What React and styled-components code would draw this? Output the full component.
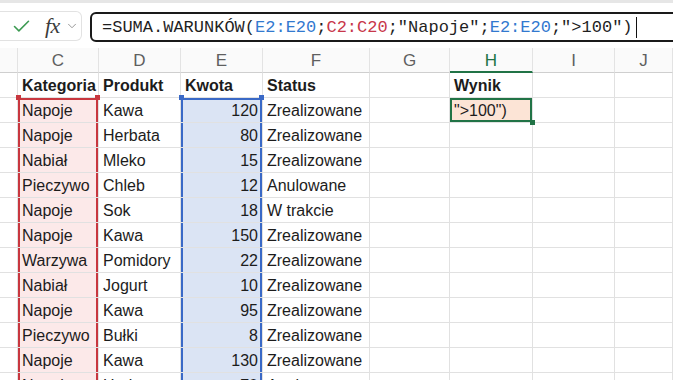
import styled, { createGlobalStyle } from "styled-components";
import { Check, ChevronDown } from "lucide-react";

const GlobalStyle = createGlobalStyle`
  body {
    margin: 0;
    background: #ffffff;
    overflow: hidden;
    font-family: "Liberation Sans", Arial, sans-serif;
  }
`;

const Page = styled.div`
  width: 673px;
  height: 380px;
  overflow: hidden;
  display: flex;
  flex-direction: column;
  & > * {
    flex-shrink: 0;
  }
`;

const Strip = styled.div`
  height: 3px;
  background: #e6e6e6;
`;

const FormulaBar = styled.div`
  height: 45px;
  box-sizing: border-box;
  padding-top: 8px;
  display: flex;
  align-items: flex-start;
  gap: 8px;
  margin-right: -20px;
`;

const FxBox = styled.div`
  width: 82px;
  height: 30px;
  box-sizing: border-box;
  border: 1px solid #e2e2e2;
  border-left: none;
  border-radius: 0 6px 6px 0;
  display: flex;
  align-items: center;
  padding-left: 11px;
  flex-shrink: 0;
`;

const Fx = styled.span`
  font-family: "Liberation Serif", "Times New Roman", serif;
  font-style: italic;
  font-size: 22px;
  color: #3b3b3b;
  margin-left: 13px;
  margin-right: 5px;
  letter-spacing: -0.5px;
`;

const FormulaInput = styled.div`
  flex: 1;
  height: 30px;
  margin-top: 1px;
  box-sizing: border-box;
  border: 2px solid #1a1a1a;
  border-radius: 6px;
  display: flex;
  align-items: center;
  padding-left: 10px;
  font-family: "Liberation Mono", "Courier New", monospace;
  font-size: 17px;
  color: #1f1f1f;
  white-space: nowrap;
`;

const Ref = styled.span`
  color: ${(p) => (p.$tone === "red" ? "#c8374a" : "#3279cf")};
`;

const Caret = styled.span`
  display: inline-block;
  width: 0;
  height: 21px;
  border-left: 1.5px solid #111;
  margin-left: 3px;
`;

const Sheet = styled.div`
  display: grid;
  grid-template-columns: 18px 81px 82px 82px 107px 80px 83px 82px 1fr;
  grid-auto-rows: 25px;
`;

const ColHead = styled.div`
  box-sizing: border-box;
  display: flex;
  align-items: center;
  justify-content: center;
  background: #fafafa;
  border-right: 1px solid #e3e3e3;
  border-bottom: ${(p) => (p.$active ? "2px solid #217346" : "1px solid #cfcfcf")};
  color: ${(p) => (p.$active ? "#217346" : "#5f5f5f")};
  font-size: 17px;
  padding-top: 2px;
`;

const rangeColors = {
  red: { line: "#c8373f", fill: "#fce9e9" },
  blue: { line: "#3a69c6", fill: "#dbe4f4" },
};

const Cell = styled.div`
  position: relative;
  box-sizing: border-box;
  border-right: 1px solid #e1e1e1;
  border-bottom: 1px solid #e1e1e1;
  padding: 1px 4px 0 4px;
  display: flex;
  align-items: center;
  justify-content: ${(p) => (p.$right ? "flex-end" : "flex-start")};
  font-size: 16px;
  font-weight: ${(p) => (p.$bold ? 700 : 400)};
  color: #1c1c1c;
  white-space: nowrap;
  background: ${(p) =>
    p.$active ? "#fce4d6" : p.$range ? rangeColors[p.$range].fill : "transparent"};
  box-shadow: ${(p) => {
    if (p.$active) return "inset 0 0 0 2px #217346";
    if (!p.$range) return "none";
    const c = rangeColors[p.$range].line;
    const top = p.$first ? `, inset 0 2px 0 ${c}` : "";
    return `inset 2px 0 0 ${c}, inset -2px 0 0 ${c}${top}`;
  }};
  z-index: ${(p) => (p.$range || p.$active ? 1 : 0)};

  &::before,
  &::after {
    content: "";
    position: absolute;
    width: 5px;
    height: 5px;
    background: ${(p) =>
      p.$active ? "#217346" : p.$range ? rangeColors[p.$range].line : "transparent"};
  }
  &::before {
    left: -2px;
    top: -3px;
    display: ${(p) => (p.$first ? "block" : "none")};
  }
  &::after {
    display: ${(p) => (p.$first || p.$active ? "block" : "none")};
    right: ${(p) => (p.$active ? "-3px" : "-2px")};
    top: ${(p) => (p.$active ? "auto" : "-3px")};
    bottom: ${(p) => (p.$active ? "-3px" : "auto")};
  }
`;

const columns = ["", "C", "D", "E", "F", "G", "H", "I", "J"];

const data = [
  ["Napoje", "Kawa", 120, "Zrealizowane"],
  ["Napoje", "Herbata", 80, "Zrealizowane"],
  ["Nabiał", "Mleko", 15, "Zrealizowane"],
  ["Pieczywo", "Chleb", 12, "Anulowane"],
  ["Napoje", "Sok", 18, "W trakcie"],
  ["Napoje", "Kawa", 150, "Zrealizowane"],
  ["Warzywa", "Pomidory", 22, "Zrealizowane"],
  ["Nabiał", "Jogurt", 10, "Zrealizowane"],
  ["Napoje", "Kawa", 95, "Zrealizowane"],
  ["Pieczywo", "Bułki", 8, "Zrealizowane"],
  ["Napoje", "Kawa", 130, "Zrealizowane"],
  ["Napoje", "Herbata", 70, "Anulowane"],
];

const App = () => {
  return (
    <>
      <GlobalStyle />
      <Page>
        <Strip />
        <FormulaBar>
          <FxBox>
            <Check size={21} color="#3c9a52" strokeWidth={1.8} />
            <Fx>fx</Fx>
            <ChevronDown size={14} color="#8a8a8a" strokeWidth={1.5} />
          </FxBox>
          <FormulaInput>
            =SUMA.WARUNKÓW(<Ref $tone="blue">E2:E20</Ref>;<Ref $tone="red">C2:C20</Ref>
            ;"Napoje";<Ref $tone="blue">E2:E20</Ref>;"&gt;100")
            <Caret />
          </FormulaInput>
        </FormulaBar>

        <Sheet>
          {columns.map((c) => (
            <ColHead key={"h" + c} $active={c === "H"}>
              {c}
            </ColHead>
          ))}

          <Cell />
          <Cell $bold>Kategoria</Cell>
          <Cell $bold>Produkt</Cell>
          <Cell $bold>Kwota</Cell>
          <Cell $bold>Status</Cell>
          <Cell />
          <Cell $bold>Wynik</Cell>
          <Cell />
          <Cell />

          {data.map((row, i) => (
            <Row key={i} row={row} index={i} />
          ))}
        </Sheet>
      </Page>
    </>
  );
};

const Row = ({ row, index }) => {
  const first = index === 0;
  return (
    <>
      <Cell />
      <Cell $range="red" $first={first}>
        {row[0]}
      </Cell>
      <Cell>{row[1]}</Cell>
      <Cell $range="blue" $first={first} $right>
        {row[2]}
      </Cell>
      <Cell>{row[3]}</Cell>
      <Cell />
      <Cell $active={first}>{first ? '">100")' : ""}</Cell>
      <Cell />
      <Cell />
    </>
  );
};

export default App;
